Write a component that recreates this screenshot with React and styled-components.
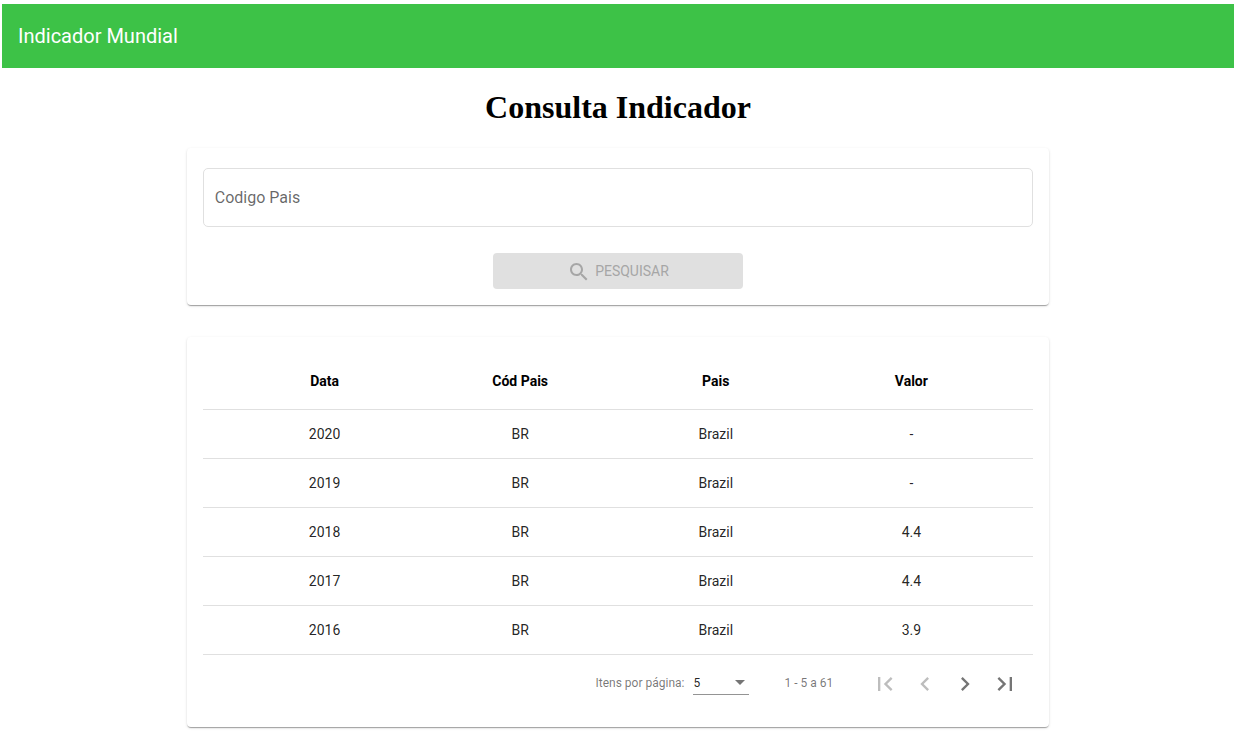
import React, { useState } from 'react';
import styled, { createGlobalStyle } from 'styled-components';

const GlobalStyle = createGlobalStyle`
  *, *::before, *::after { box-sizing: border-box; }
  body {
    margin: 0;
    background: #fff;
    font-family: Roboto, "Liberation Sans", sans-serif;
  }
`;

const Page = styled.div`
  padding: 4px 3px 4px 2px;
`;

const Toolbar = styled.header`
  display: flex;
  align-items: center;
  height: 64px;
  padding: 0 16px;
  background: #3dc247;
  color: #fff;
  font-size: 20px;
  line-height: 32px;
`;

const Content = styled.main`
  display: flex;
  flex-direction: column;
  align-items: center;
`;

const Title = styled.h1`
  margin: 21px 0 22px;
  font-family: "Liberation Serif", serif;
  font-size: 32px;
  line-height: 37px;
  font-weight: 700;
  color: #000;
`;

const Card = styled.section`
  width: 70%;
  margin-bottom: ${({ $last }) => ($last ? '0' : '32px')};
  padding: 16px;
  border-radius: 4px;
  background: #fff;
  box-shadow:
    0 2px 1px -1px rgba(0, 0, 0, 0.2),
    0 1px 1px 0 rgba(0, 0, 0, 0.14),
    0 1px 3px 0 rgba(0, 0, 0, 0.12);
`;

const SearchForm = styled.form`
  display: flex;
  flex-direction: column;
  align-items: center;
  gap: 26px;
  padding-top: 4px;
`;

const TextField = styled.input`
  width: 100%;
  height: 59px;
  padding: 0 11px;
  border: 1px solid #e0e0e0;
  border-radius: 5px;
  background: transparent;
  color: rgba(0, 0, 0, 0.87);
  font-family: inherit;
  font-size: 16px;
  outline: none;

  &::placeholder { color: rgba(0, 0, 0, 0.6); opacity: 1; }
  &:focus { border-color: #3dc247; }
`;

const SearchButton = styled.button`
  display: flex;
  align-items: center;
  justify-content: center;
  gap: 4px;
  width: 250px;
  height: 36px;
  padding: 0 16px;
  border: 0;
  border-radius: 4px;
  background: #3dc247;
  color: #fff;
  font-family: inherit;
  font-size: 14px;
  line-height: 36px;

  &:disabled { background: #e0e0e0; color: #a6a6a6; }
`;

const Table = styled.table`
  display: block;
  width: 100%;
  font-size: 14px;
  line-height: 20px;

  thead, tbody { display: block; }
`;

const Row = styled.tr`
  display: grid;
  grid-template-columns: repeat(4, 1fr);
  align-items: center;
  height: ${({ $head }) => ($head ? '57px' : '49px')};
  padding: 0 24px;
  border-bottom: 1px solid #e0e0e0;
`;

const HeadCell = styled.th`
  padding: 0;
  text-align: center;
  font-weight: 700;
  color: #000;
`;

const Cell = styled.td`
  padding: 0;
  text-align: center;
  color: rgba(0, 0, 0, 0.87);
`;

const Paginator = styled.nav`
  display: flex;
  align-items: center;
  justify-content: flex-end;
  height: 56px;
  padding-right: 8px;
  font-size: 12px;
  line-height: 20px;
  color: rgba(0, 0, 0, 0.54);
`;

const SizeBox = styled.div`
  display: flex;
  align-items: center;
  width: 56px;
  height: 24px;
  margin: 0 35px 0 9px;
  border-bottom: 1px solid #949494;
`;

const SizeSelect = styled.select`
  flex: 1;
  min-width: 0;
  height: 20px;
  margin-right: -18px;
  padding: 0 18px 0 0;
  border: 0;
  appearance: none;
  background: transparent;
  color: rgba(0, 0, 0, 0.87);
  font-family: inherit;
  font-size: 12px;
  outline: none;
`;

const Arrow = styled.svg`
  width: 10px;
  height: 5px;
  margin: 0 4px;
  fill: #757575;
  pointer-events: none;
`;

const Range = styled.span`
  margin-right: 32px;
`;

const PageButton = styled.button`
  display: flex;
  align-items: center;
  justify-content: center;
  width: 40px;
  height: 40px;
  padding: 0;
  border: 0;
  border-radius: 50%;
  background: transparent;
  color: #757575;

  &:disabled { color: #bdbdbd; }
`;

const Icon = styled.svg`
  flex: none;
  width: ${({ $size }) => $size}px;
  height: ${({ $size }) => $size}px;
  margin-top: 2px;
  fill: currentColor;
`;

const SEARCH_PATH =
  'M15.5 14h-.79l-.28-.27C15.41 12.59 16 11.11 16 9.5 16 5.91 13.09 3 9.5 3S3 5.91 3 9.5 5.91 16 9.5 16c1.61 0 3.09-.59 4.23-1.57l.27.28v.79l5 4.99L20.49 19l-4.99-5zm-6 0C7.01 14 5 11.99 5 9.5S7.01 5 9.5 5 14 7.01 14 9.5 11.99 14 9.5 14z';

const columns = ['Data', 'Cód Pais', 'Pais', 'Valor'];

const rows = [
  ['2020', 'BR', 'Brazil', '-'],
  ['2019', 'BR', 'Brazil', '-'],
  ['2018', 'BR', 'Brazil', '4.4'],
  ['2017', 'BR', 'Brazil', '4.4'],
  ['2016', 'BR', 'Brazil', '3.9'],
];

const pageButtons = [
  {
    label: 'Primeira página',
    path: 'M18.41 16.59L13.82 12l4.59-4.59L17 6l-6 6 6 6zM6 6h2v12H6z',
    disabled: true,
  },
  {
    label: 'Página anterior',
    path: 'M15.41 7.41L14 6l-6 6 6 6 1.41-1.41L10.83 12z',
    disabled: true,
  },
  {
    label: 'Próxima página',
    path: 'M10 6L8.59 7.41 13.17 12l-4.58 4.59L10 18l6-6z',
    disabled: false,
  },
  {
    label: 'Última página',
    path: 'M5.59 7.41L10.18 12l-4.59 4.59L7 18l6-6-6-6zM16 6h2v12h-2z',
    disabled: false,
  },
];

export default function App() {
  const [code, setCode] = useState('');
  const [size, setSize] = useState('5');

  return (
    <>
      <GlobalStyle />
      <Page>
        <Toolbar>Indicador Mundial</Toolbar>
        <Content>
          <Title>Consulta Indicador</Title>
          <Card>
            <SearchForm onSubmit={(event) => event.preventDefault()}>
              <TextField
                aria-label="Codigo Pais"
                placeholder="Codigo Pais"
                value={code}
                onChange={(event) => setCode(event.target.value)}
              />
              <SearchButton type="submit" disabled={!code}>
                <Icon $size={24} viewBox="0 0 24 24" aria-hidden="true">
                  <path d={SEARCH_PATH} />
                </Icon>
                PESQUISAR
              </SearchButton>
            </SearchForm>
          </Card>
          <Card $last>
            <Table>
              <thead>
                <Row $head>
                  {columns.map((name) => (
                    <HeadCell key={name} scope="col">{name}</HeadCell>
                  ))}
                </Row>
              </thead>
              <tbody>
                {rows.map((row) => (
                  <Row key={row[0]}>
                    {row.map((value, index) => (
                      <Cell key={columns[index]}>{value}</Cell>
                    ))}
                  </Row>
                ))}
              </tbody>
            </Table>
            <Paginator aria-label="Paginação">
              <label htmlFor="page-size">Itens por página:</label>
              <SizeBox>
                <SizeSelect
                  id="page-size"
                  value={size}
                  onChange={(event) => setSize(event.target.value)}
                >
                  <option>5</option>
                  <option>10</option>
                  <option>20</option>
                </SizeSelect>
                <Arrow viewBox="0 0 10 5" aria-hidden="true">
                  <path d="M0 0h10L5 5z" />
                </Arrow>
              </SizeBox>
              <Range>1 - 5 a 61</Range>
              {pageButtons.map(({ label, path, disabled }) => (
                <PageButton key={label} type="button" aria-label={label} disabled={disabled}>
                  <Icon $size={28} viewBox="0 0 24 24" aria-hidden="true">
                    <path d={path} />
                  </Icon>
                </PageButton>
              ))}
            </Paginator>
          </Card>
        </Content>
      </Page>
    </>
  );
}
